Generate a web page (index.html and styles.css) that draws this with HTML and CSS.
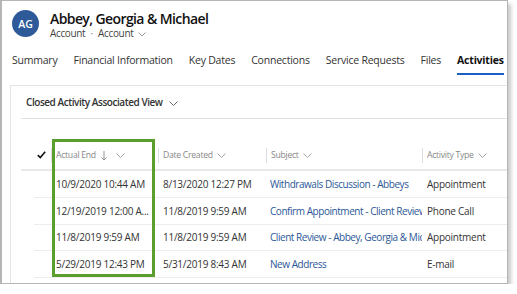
FILE: index.html
```html
<!DOCTYPE html>
<html lang="en">
<head>
  <meta charset="UTF-8" />
  <title>Abbey, Georgia &amp; Michael - Activities</title>
  <link rel="stylesheet" href="styles.css">
</head>
<body>
  <div class="frame">
    <!-- Record header -->
    <div class="record-header">
      <div class="avatar">AG</div>
      <div class="record-title">
        <div class="name">Abbey, Georgia &amp; Michael</div>
        <div class="subtitle">Account <span class="dot">·</span> Account
          <svg class="chev" width="8" height="5" viewBox="0 0 8 5"><path d="M0.5 0.5 L4 4 L7.5 0.5" fill="none" stroke="#888" stroke-width="0.9"/></svg>
        </div>
      </div>
    </div>

    <!-- Tabs -->
    <div class="tabs">
      <span class="tab">Summary</span>
      <span class="tab">Financial Information</span>
      <span class="tab">Key Dates</span>
      <span class="tab">Connections</span>
      <span class="tab">Service Requests</span>
      <span class="tab">Files</span>
      <span class="tab active">Activities</span>
    </div>

    <!-- Activities card -->
    <div class="content">
      <div class="card">
        <div class="view-title">Closed Activity Associated View
          <svg class="chev" width="9" height="5" viewBox="0 0 9 5"><path d="M0.5 0.5 L4.5 4.5 L8.5 0.5" fill="none" stroke="#555" stroke-width="0.9"/></svg>
        </div>
        <div class="grid">
          <div class="grid-head">
            <div class="check-cell">
              <svg width="9" height="8" viewBox="0 0 9 8"><path d="M0.8 4.2 L3.3 6.6 L8.2 0.8" fill="none" stroke="#111" stroke-width="1.6"/></svg>
            </div>
            <div class="col">Actual End
              <svg class="sort" width="6" height="10" viewBox="0 0 6 10"><path d="M3 0 V9 M0.5 6.5 L3 9 L5.5 6.5" fill="none" stroke="#888" stroke-width="0.9"/></svg>
              <svg class="chev wide" width="9" height="5" viewBox="0 0 9 5"><path d="M0.5 0.5 L4.5 4.5 L8.5 0.5" fill="none" stroke="#999" stroke-width="0.9"/></svg>
            </div>
            <div class="col">Date Created
              <svg class="chev" width="9" height="5" viewBox="0 0 9 5"><path d="M0.5 0.5 L4.5 4.5 L8.5 0.5" fill="none" stroke="#999" stroke-width="0.9"/></svg>
            </div>
            <div class="col">Subject
              <svg class="chev" width="9" height="5" viewBox="0 0 9 5"><path d="M0.5 0.5 L4.5 4.5 L8.5 0.5" fill="none" stroke="#999" stroke-width="0.9"/></svg>
            </div>
            <div class="col">Activity Type
              <svg class="chev" width="9" height="5" viewBox="0 0 9 5"><path d="M0.5 0.5 L4.5 4.5 L8.5 0.5" fill="none" stroke="#999" stroke-width="0.9"/></svg>
            </div>
          </div>

          <div class="grid-row">
            <div></div>
            <div class="cell">10/9/2020 10:44 AM</div>
            <div class="cell">8/13/2020 12:27 PM</div>
            <div class="cell link">Withdrawals Discussion - Abbeys</div>
            <div class="cell">Appointment</div>
          </div>
          <div class="grid-row">
            <div></div>
            <div class="cell" title="12/19/2019 12:00 AM">12/19/2019 12:00 A...</div>
            <div class="cell">11/8/2019 9:59 AM</div>
            <div class="cell link">Confirm Appointment - Client Review</div>
            <div class="cell">Phone Call</div>
          </div>
          <div class="grid-row">
            <div></div>
            <div class="cell">11/8/2019 9:59 AM</div>
            <div class="cell">11/8/2019 9:59 AM</div>
            <div class="cell link">Client Review - Abbey, Georgia &amp; Michael</div>
            <div class="cell">Appointment</div>
          </div>
          <div class="grid-row">
            <div></div>
            <div class="cell">5/29/2019 12:43 PM</div>
            <div class="cell">5/31/2019 8:43 AM</div>
            <div class="cell link">New Address</div>
            <div class="cell">E-mail</div>
          </div>

          <!-- Highlight around the Actual End column -->
          <div class="highlight"></div>
        </div>
      </div>
    </div>
  </div>
</body>
</html>
```

FILE: styles.css
```css
body {
  margin: 0;
  padding: 0;
  background: #fff;
  font-family: "Open Sans", "Noto Sans", sans-serif;
  color: #333;
}
.frame {
  width: 505px;
  height: 282px;
  border: 1px solid #b5b5b5;
  border-left-width: 2px;
  box-shadow: 3px 4px 4px rgba(0, 0, 0, 0.22);
  background: #fff;
  overflow: hidden;
  display: flex;
  flex-direction: column;
}
/* Record header */
.record-header {
  display: flex;
  align-items: flex-start;
  gap: 11px;
  padding: 9px 0 0 10px;
  height: 35px;
}
.avatar {
  width: 27px;
  height: 27px;
  border-radius: 50%;
  background: #2e5a9a;
  color: #fff;
  font-size: 10.5px;
  font-weight: 600;
  display: flex;
  justify-content: center;
  align-items: center;
}
.name {
  font-size: 14px;
  font-weight: 600;
  color: #111;
  line-height: 17px;
  letter-spacing: -0.6px;
}
.subtitle {
  font-size: 10px;
  color: #444;
  line-height: 12px;
  letter-spacing: -0.35px;
}
.subtitle .dot {
  margin: 0 3px;
  color: #777;
}
.chev {
  margin-left: 2px;
  vertical-align: middle;
}
/* Tabs */
.tabs {
  display: flex;
  gap: 16px;
  padding: 0 0 0 10px;
  margin-top: 8px;
  height: 28px;
}
.tab {
  font-size: 10.5px;
  color: #333;
  line-height: 26px;
  border-bottom: 2px solid transparent;
  height: 26px;
  white-space: nowrap;
  flex-shrink: 0;
  letter-spacing: -0.22px;
}
.tab.active {
  font-weight: 700;
  color: #111;
  border-bottom-color: #1b5fc4;
}
/* Card */
.content {
  flex: 1;
  padding: 10px 0 0 8px;
}
.card {
  border: 1px solid #e4e4e4;
  border-right: none;
  height: 200px;
  padding: 0 0 0 10px;
}
.view-title {
  font-size: 10px;
  font-weight: 600;
  color: #333;
  line-height: 32px;
  padding-left: 5px;
  letter-spacing: -0.45px;
  border-bottom: 1px solid #e1e1e1;
}
.view-title .chev {
  margin-left: 4px;
}
.grid {
  position: relative;
  margin-top: 23px;
  font-size: 10px;
  letter-spacing: -0.25px;
}
.grid-head, .grid-row {
  display: grid;
  grid-template-columns: 30px 107px 108px 156px 1fr;
  align-items: center;
}
.grid-head {
  height: 27px;
  border-bottom: 2px solid #e8e8e8;
  color: #888;
  font-size: 8.7px;
  letter-spacing: -0.3px;
}
.check-cell {
  text-align: right;
  padding-right: 5px;
  line-height: 8px;
}
.col {
  border-left: 1px solid #ddd;
  padding-left: 4px;
  line-height: 15px;
  white-space: nowrap;
}
.col .sort {
  margin-left: 3px;
  vertical-align: middle;
}
.col .wide {
  margin-left: 7px;
}
.grid-row {
  height: 25.8px;
  margin-left: 13px;
  grid-template-columns: 17px 107px 108px 156px 1fr;
  border-bottom: 1px solid #ececec;
}
.cell {
  padding-left: 5px;
  white-space: nowrap;
  overflow: hidden;
  color: #333;
}
.cell.link {
  color: #2b5797;
  padding-left: 4px;
  letter-spacing: -0.45px;
}
.highlight {
  position: absolute;
  left: 31px;
  top: -3px;
  width: 97px;
  height: 132px;
  border: 3px solid #5c9e2e;
  pointer-events: none;
}
```
